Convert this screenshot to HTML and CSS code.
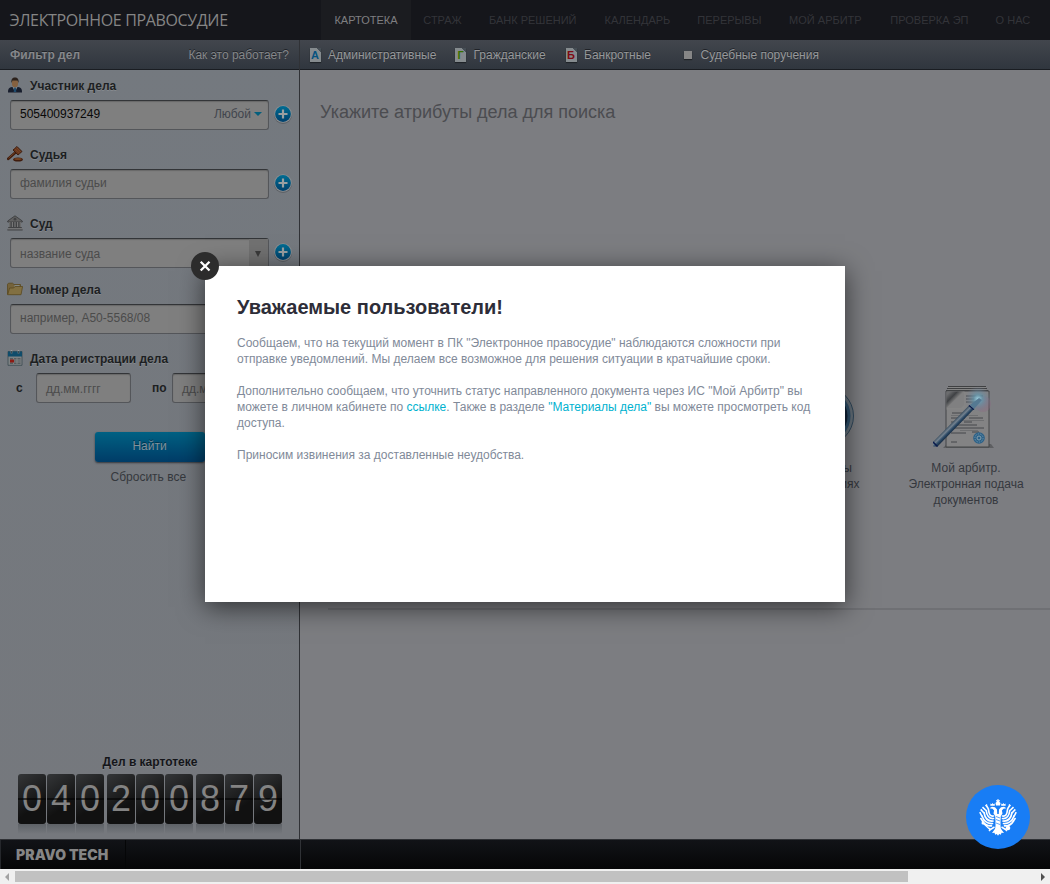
FILE: index.html
```html
<!DOCTYPE html>
<html lang="ru">
<head>
<meta charset="utf-8">
<title>Электронное правосудие</title>
<link rel="stylesheet" href="styles.css">
</head>
<body>
<svg class="defs" width="0" height="0">
  <defs>
    <linearGradient id="plusFill" x1="0" y1="0" x2="0" y2="1"><stop offset="0" stop-color="#006c92"/><stop offset="1" stop-color="#00406c"/></linearGradient>
    <symbol id="plus" viewBox="0 0 20 20"><circle cx="10" cy="11" r="9" fill="#5d6166"/><circle cx="10" cy="10" r="8.800" fill="#8d9093"/><circle cx="10" cy="10" r="7.900" fill="url(#plusFill)"/><path d="M10 5.500v9M5.500 10h9" stroke="#9a9fa1" stroke-width="2.200"/></symbol>
  </defs>
</svg>
<div class="page">
  <header class="top">
    <div class="brand">ЭЛЕКТРОННОЕ ПРАВОСУДИЕ</div>
    <nav class="nav">
      <a class="nav-item active">КАРТОТЕКА</a><a class="nav-item w66">СТРАЖ</a><a class="nav-item w115">БАНК РЕШЕНИЙ</a><a class="nav-item w94">КАЛЕНДАРЬ</a><a class="nav-item w91">ПЕРЕРЫВЫ</a><a class="nav-item w101">МОЙ АРБИТР</a><a class="nav-item w106">ПРОВЕРКА ЭП</a><a class="nav-item w61">О НАС</a>
    </nav>
  </header>
  <div class="columns">
    <aside class="side">
      <div class="bar side-bar"><b>Фильтр дел</b><span>Как это работает?</span></div>
      <div class="filters">
        <section class="field">
          <h3><svg class="ico" viewBox="0 0 16 16"><path d="M1 15.500c0-4 1-5 4-5.500h6c3 .5 4 1.500 4 5.500z" fill="#171d2c"/><path d="M5.500 10h5L8 15z" fill="#7c8389"/><path d="M7.300 10.500h1.500l.5 4.500H6.700z" fill="#1c4a6d"/><ellipse cx="8" cy="6" rx="3.100" ry="4.300" fill="#856140"/><path d="M4.500 6C4 2 5.500.5 8 .5S12 2 11.500 6L10.500 3.500H5.500z" fill="#2b211b"/></svg>Участник дела</h3>
          <div class="row"><div class="input"><span class="value">505400937249</span><span class="any">Любой<i class="caret"></i></span></div><svg class="plus"><use href="#plus"/></svg></div>
        </section>
        <section class="field">
          <h3><svg class="ico" viewBox="0 0 16 16"><path d="M1.300 12.800L9 6" stroke="#3f1c0d" stroke-width="2.600" stroke-linecap="round"/><path d="M1.500 12.200L8.500 6" stroke="#74401f" stroke-width="1"/><path d="M6 4l4-3.500 5 5L11 9z" fill="#67351b" stroke="#35190c" stroke-width=".9"/><path d="M7.700 2.500l5 5M9.500 1.500l4.500 4.700" stroke="#7e4a2c" stroke-width=".8"/><ellipse cx="11" cy="13.600" rx="4.800" ry="2" fill="#3f1c0d"/><ellipse cx="11" cy="12.900" rx="3.800" ry="1" fill="#74401f"/></svg>Судья</h3>
          <div class="row"><div class="input">фамилия судьи</div><svg class="plus"><use href="#plus"/></svg></div>
        </section>
        <section class="field court">
          <h3><svg class="ico" viewBox="0 0 16 16"><path d="M.7 6L8 .8 15.300 6v1H.7z" fill="#626262" stroke="#3c3d3f" stroke-width=".9"/><circle cx="8" cy="4.200" r="1.400" fill="#414244"/><path d="M2 7h12v5.500H2z" fill="#414244"/><path d="M2.800 7v5.500M5.400 7v5.500M8 7v5.500M10.600 7v5.500M13.200 7v5.500" stroke="#777" stroke-width="1.200"/><path d="M1.200 12.500h13.600M.4 14.800h15.200" stroke="#414244" stroke-width="1.200"/><path d="M.7 13.700h14.600" stroke="#747474" stroke-width="1.200"/></svg>Суд</h3>
          <div class="row"><div class="input low">название суда<span class="drop"><i></i></span></div><svg class="plus"><use href="#plus"/></svg></div>
        </section>
        <section class="field">
          <h3><svg class="ico" viewBox="0 0 16 16"><path d="M.5 13.500V3.200l1-1h4L7 3.500h6.500v3" fill="#75633b" stroke="#5b4920" stroke-width=".8"/><path d="M7.500 4h5v2h-5z" fill="#858883"/><path d="M.7 13.700L2.600 7h4l1.500-1.500h7.500L14 13.700z" fill="#827042" stroke="#5b4920" stroke-width=".8"/></svg>Номер дела</h3>
          <div class="row"><div class="input">например, А50-5568/08</div></div>
        </section>
        <section class="field">
          <h3><svg class="ico" viewBox="0 0 16 16"><path d="M1 1.500h14v13.800H1z" fill="#7e8283" stroke="#3a4a51" stroke-width=".8"/><path d="M1 1.500h14v5H1z" fill="#0f4c6b"/><path d="M4.500 0v3.500M11.500 0v3.500" stroke="#9aa0a2" stroke-width="1.500"/><path d="M4.500 1v2.500M11.500 1v2.500" stroke="#26353c" stroke-width=".8"/><path d="M3 8h10.500v6H3z" fill="#555d60"/><path d="M3 10h10.500M3 12h10.500M6.500 8v6M10 8v6" stroke="#8a8d8d" stroke-width=".8"/><path d="M3 9.500h4v3H3z" fill="#8c1b14"/></svg>Дата регистрации дела</h3>
          <div class="row dates"><b class="from">с</b><div class="input low date">дд.мм.гггг</div><b class="to">по</b><div class="input low date">дд.мм.гггг</div></div>
        </section>
      </div>
      <div class="actions"><div class="find">Найти</div><span class="reset">Сбросить все</span></div>
      <div class="counter">
        <b>Дел в картотеке</b>
        <div class="digits"><div class="group"><i>0</i><i>4</i><i>0</i></div><div class="group"><i>2</i><i>0</i><i>0</i></div><div class="group"><i>8</i><i>7</i><i>9</i></div></div>
      </div>
    </aside>
    <main class="main">
      <div class="bar cats">
        <span class="cat"><i class="doc blue">А</i>Административные</span><span class="cat civil"><i class="doc green">Г</i>Гражданские</span><span class="cat bank"><i class="doc red">Б</i>Банкротные</span><span class="cat orders"><i class="check"></i>Судебные поручения</span>
      </div>
      <h1>Укажите атрибуты дела для поиска</h1>
      <div class="services">
        <div class="service breaks">
          <svg viewBox="0 0 64 64"><circle cx="32" cy="32" r="29.500" fill="#68737c" stroke="#30485c"/><circle cx="32" cy="32" r="25" fill="#0f2238" stroke="#2f526e" stroke-width="3"/><path d="M32 14v18l10 8" fill="none" stroke="#8a949b" stroke-width="3"/></svg>
          <p>Перерывы<br>в заседаниях</p>
        </div>
        <div class="service">
          <svg viewBox="0 0 64 64"><defs><linearGradient id="wand" gradientUnits="userSpaceOnUse" x1="18" y1="38" x2="24" y2="44"><stop offset="0" stop-color="#1e3347"/><stop offset=".4" stop-color="#74828f"/><stop offset=".65" stop-color="#2d4a66"/><stop offset="1" stop-color="#0e2036"/></linearGradient><radialGradient id="glow"><stop offset="0" stop-color="#9fd3e3"/><stop offset=".35" stop-color="#6595aa" stop-opacity=".8"/><stop offset="1" stop-color="#747b91" stop-opacity="0"/></radialGradient><linearGradient id="curl" x1="0" y1="0" x2="1" y2="1"><stop offset=".1" stop-color="#6b6c6e"/><stop offset=".3" stop-color="#3f4144"/><stop offset=".5" stop-color="#858585"/></linearGradient></defs>
          <path d="M10 64l4-4h44l3 4z" fill="#5d5e61"/><path d="M15 2h38v6H15z" fill="#858585"/><path d="M15 2.500h38M14 4.500h40M13 6.500h42" stroke="#3f4042"/><path d="M13 7h43v56H13z" fill="#838384" stroke="#434447"/><path d="M13.500 7.500h18v18h-18z" fill="url(#curl)"/><path d="M13.500 24L31 7.500V21l-3 3z" fill="#808081"/><path d="M33 12h17M33 15h14M33 18h14M19 29h16M18 34h14M36 34h14M18 38h10M31 38h8M18 41h26M18 44h33M18 49h15M39 48h7M18 58h6" stroke="#45474b" stroke-width="1"/><path d="M18 31.500h27M22 36.500h29M27 46.500h18" stroke="#68696c" stroke-width=".8"/><circle cx="50" cy="20" r="8" fill="#8b6783" opacity=".35"/><circle cx="45" cy="15" r="13" fill="url(#glow)"/><path d="M0 58L36.500 21l4.500 4L4.500 62.500H0z" fill="url(#wand)"/><path d="M0 58l4.500 4.500M36 21.500l5 4" stroke="#0a1a4c" stroke-width="1.500"/><path d="M37 21l9-7 3 2-8 9z" fill="#557992"/><circle cx="46" cy="54" r="5.800" fill="#2b6087"/><circle cx="46" cy="54" r="4.100" fill="none" stroke="#6d92a8" stroke-width="1" stroke-dasharray="1.500 1"/><circle cx="46" cy="54" r="2" fill="none" stroke="#86a0ad"/></svg>
          <p>Мой арбитр.<br>Электронная подача<br>документов</p>
        </div>
      </div>
      <div class="rule"></div>
    </main>
  </div>
  <footer class="foot"><div class="foot-brand">PRAVO TECH</div></footer>
  <div class="scroll"><i class="left"></i><div class="thumb"></div><i class="right"></i></div>
</div>
<div class="dialog">
  <svg class="close" viewBox="0 0 28 28"><circle cx="14" cy="14" r="14" fill="#2c2c2c"/><path d="M9.700 9.700l8.800 8.800M18.500 9.700l-8.800 8.800" stroke="#fff" stroke-width="2.300"/></svg>
  <h2>Уважаемые пользователи!</h2>
  <p>Сообщаем, что на текущий момент в ПК "Электронное правосудие" наблюдаются сложности при<br>отправке уведомлений. Мы делаем все возможное для решения ситуации в кратчайшие сроки.</p>
  <p>Дополнительно сообщаем, что уточнить статус направленного документа через ИС "Мой Арбитр" вы<br>можете в личном кабинете по <a>ссылке</a>. Также в разделе <a>"Материалы дела"</a> вы можете просмотреть код<br>доступа.</p>
  <p>Приносим извинения за доставленные неудобства.</p>
</div>
<div class="assistant">
  <svg viewBox="0 0 64 64" fill="#fff">
    <path d="M31.500 14h1v1.300h1.500v1h-1.200l1.700 1.700-.5 2.500h-4l-.5-2.500 1.700-1.700H30v-1h1.500z"/>
    <g id="wing">
      <path d="M31 24.500l-2-2.300-3-.4-2.500 1.400 3 .6 1.600 1.700-.6 3 2 3 .8 7.500-1 5 2.700 1z"/>
      <path d="M24.300 20.800l.2-2.300 1.200.8.900-1.300.9 1.300 1.200-.8.100 2.300z"/>
      <path d="M27.500 31c-3 .5-4.500-1-5-6.500M27.500 33.500c-4 .5-6.500-2-7.300-8M27 36c-5 .5-8-2.500-9-8.500M26.500 38.500c-5 .5-8.500-2-10.500-7.500M25.500 40.800c-4 .3-7-1.300-9-4.800" fill="none" stroke="#fff" stroke-width="1.700" stroke-linecap="round"/>
      <path d="M22.500 24l-2.200-3.500M20 25.500l-3.500-3.300M18 28l-3.300-3.600M16 31.500l-2.200-4.300M17 36.500l-2.500-3.500" stroke="#fff" stroke-width="1.600"/>
      <path d="M19.500 21l1.500-1.500M28.500 42l-4 2.500-1.500-1.500M24.500 44.500l-1.500 1.500" fill="none" stroke="#fff" stroke-width="1.500"/>
    </g>
    <use href="#wing" transform="matrix(-1 0 0 1 64 0)"/>
    <path d="M29.500 29h5v14h-5z"/>
    <path d="M17.500 38.500l7 6.500" stroke="#fff" stroke-width="1.200"/><circle cx="17" cy="38" r="1.500"/><circle cx="42" cy="43" r="2.300"/>
    <path d="M30 31.500l4 1.500M30 34.500l4 1.500M30 38l4 1.500" stroke="#187df5" stroke-width=".7"/>
    <path d="M31 41l-5 7 2.500-.3.700 2 1.600-.8 1.200 1.800 1.200-1.800 1.600.8.700-2 2.500.3-5-7z"/>
  </svg>
</div>
</body>
</html>
```
FILE: styles.css
```css
* { box-sizing: border-box; }
body { margin: 0; width: 1050px; height: 884px; overflow: hidden; font: 12px/16px "Liberation Sans", Arial, sans-serif; color: #3c3f45; background: #7c7d81; }
h1, h2, h3, p { margin: 0; font-weight: normal; }
i { font-style: normal; }
.defs { position: absolute; }
.page { display: flex; flex-direction: column; height: 884px; }
.top { display: flex; height: 40px; background: #15161b; flex: none; }
.brand { width: 321px; padding-left: 9.500px; font: 16px/40px "Open Sans", sans-serif; letter-spacing: -.36px; color: #858585; white-space: nowrap; }
.nav { display: flex; flex: 1; }
.nav-item { font-size: 11px; line-height: 40px; text-align: center; color: #333439; white-space: nowrap; width: 90px; }
.nav-item.active { background: #1b1c20; color: #7f7f80; }
.nav-item.w66 { width: 63px; } .nav-item.w115 { width: 117.400px; } .nav-item.w94 { width: 92px; } .nav-item.w91 { width: 92px; }
.nav-item.w101 { width: 100px; } .nav-item.w106 { width: 108px; } .nav-item.w61 { width: 59px; }
.columns { display: flex; flex: 1; min-height: 0; }
.side { display: flex; flex-direction: column; width: 300px; border-right: 1px solid #303236; background: linear-gradient(#74797f, #75787d); }
.bar { height: 30px; flex: none; display: flex; line-height: 30px; color: #96989a; background: linear-gradient(#42464d, #30363e); border-bottom: 1px solid #1a1d22; text-shadow: 0 -1px 0 #202328; }
.side-bar { justify-content: space-between; padding: 0 10px; }
.side-bar b { color: #85878a; }
.side-bar span { color: #85878a; }
.filters { height: 362px; padding: 6px 0 0 7px; }
.field { height: 69px; }
.court { height: 66px; }
.field h3 { display: flex; align-items: center; height: 20px; font-size: 12px; font-weight: bold; color: #1d1f22; text-shadow: 0 1px 0 #85898e; margin-bottom: 4px; }
.ico { width: 16px; height: 16px; margin-right: 7px; position: relative; top: -1px; }
.row { display: flex; align-items: center; padding-left: 3px; gap: 4px; }
.input { position: relative; display: flex; justify-content: space-between; width: 259px; height: 30px; padding: 0 6px 0 9px; border: 1px solid #54565a; border-top: 1px solid #333538; border-radius: 3px; line-height: 26px; color: #4b4b4b; background: #7f7f7f; box-shadow: inset 0 1px 1px #696969; }
.input.low { line-height: 30px; }
.value { color: #080808; }
.any { color: #41454d; }
.caret { display: inline-block; border: 4px solid transparent; border-top-color: #045f7d; border-bottom: 0; margin: 0 0 2px 3px; }
.drop { width: 19px; height: 28px; margin-right: -6px; display: flex; justify-content: center; align-items: center; background: #717171; }
.drop i { border: 3.500px solid transparent; border-top: 6px solid #3a3a3a; border-bottom: 0; margin: 2px 1px 0 0; }
.plus { width: 20px; height: 20px; margin-top: -2px; }
.dates { gap: 0; color: #1d1f22; }
.dates b { padding-left: 6px; }
.dates .from { width: 26px; }
.dates .to { width: 41px; padding-left: 21px; }
.date { width: 95px; }
.actions { display: flex; flex-direction: column; width: 110px; margin-left: 95px; flex: 1; }
.find { height: 30px; line-height: 28px; padding-right: 1px; text-align: center; color: #81919c; border-radius: 3px; background: linear-gradient(#006183, #003c67); box-shadow: 0 1px 2px #34383d; text-shadow: 0 -1px 0 #00354e; }
.reset { margin: 7px 0 0 15.500px; color: #35383d; white-space: nowrap; }
.counter { height: 85px; text-align: center; color: #141519; text-shadow: 0 1px 0 #84878b; }
.counter > b { padding-left: 1px; }
.digits { display: flex; gap: 3px; margin: 4px 0 0 18px; }
.group { display: flex; gap: 1px; }
.group i { position: relative; width: 28px; height: 50px; border-radius: 3px; font-size: 36px; line-height: 50px; color: #838383; text-shadow: none; background: linear-gradient(145deg, #343638, #111 65%); }
.group i::before { content: ""; position: absolute; left: 0; top: 24px; width: 28px; height: 2px; background: rgba(5, 5, 5, .65); }
.group i::after { content: ""; position: absolute; left: 0; top: 50px; width: 28px; height: 10px; background: linear-gradient(#5e6267, rgba(94, 98, 103, 0)); }
.main { flex: 1; display: flex; flex-direction: column; background: #7c7d81; min-width: 0; }
.cats { padding-left: 9.500px; }
.cat { display: flex; align-items: center; width: 145.500px; line-height: 30px; white-space: nowrap; color: #96989a; }
.civil { width: 110.500px; } .bank { width: 117px; }
.doc { width: 11px; height: 14px; margin: 1px 7.500px 0 0; background: linear-gradient(225deg, #454d54 3px, #858b8e 3px); box-shadow: 0 1px 1px #1f2328; font: bold 11px/15px "Liberation Sans", sans-serif; text-align: center; text-shadow: none; }
.doc.blue { color: #06527f; } .doc.green { color: #387000; } .doc.red { color: #800a12; }
.check { width: 8px; height: 8px; margin: 0 9px 0 1px; background: #868686; box-shadow: 0 1px 1px #202328; }
h1 { margin: 32px 0 0 20px; font-size: 18px; line-height: 20px; color: #4b4c50; }
.services { display: flex; justify-content: flex-end; margin-top: 262px; height: 224px; padding-right: 12.500px; }
.service { width: 143px; text-align: center; color: #35383e; }
.service.breaks { width: 144px; }
.service svg { width: 64px; height: 64px; display: block; margin: 0 auto 12px; position: relative; left: -1px; }
.breaks svg { left: 1px; }
.rule { height: 2px; margin-left: 28px; background: #6f7074; }
.foot { display: flex; height: 30px; flex: none; border-top: 1px solid #303236; background: linear-gradient(#111317, #060607); }
.foot-brand { width: 126px; padding-left: 15px; border-left: 1px solid #25272b; border-right: 1px solid #050607; font: 900 14px/29px Inter, sans-serif; color: #858585; letter-spacing: .05px; white-space: nowrap; }
.foot::after { content: ""; width: 174px; border-right: 1px solid #303236; }
.scroll { display: flex; align-items: center; height: 15px; flex: none; background: #f0f0f0; }
.thumb { width: 893px; height: 11px; background: #c1c1c1; margin-right: 133px; }
.left { border: 4px solid transparent; border-right-color: #a3a3a3; border-left: 0; margin: 0 6px 0 5px; }
.right { border: 4px solid transparent; border-left-color: #505050; border-right: 0; }
.dialog { position: absolute; left: 205px; top: 266px; width: 640px; height: 336px; padding: 30px 32px; background: #fff; box-shadow: 0 5px 25px rgba(0, 0, 0, .6); color: #818a99; white-space: nowrap; }
.dialog h2 { font-size: 20px; line-height: 22px; font-weight: bold; color: #2d2d38; margin-bottom: 17px; }
.dialog p { margin-bottom: 16px; }
.dialog a { color: #00b2cf; }
.close { position: absolute; left: -14px; top: -14px; width: 28px; height: 28px; }
.assistant { position: absolute; left: 966px; top: 785px; width: 64px; height: 64px; border-radius: 50%; background: #187df5; }
```
